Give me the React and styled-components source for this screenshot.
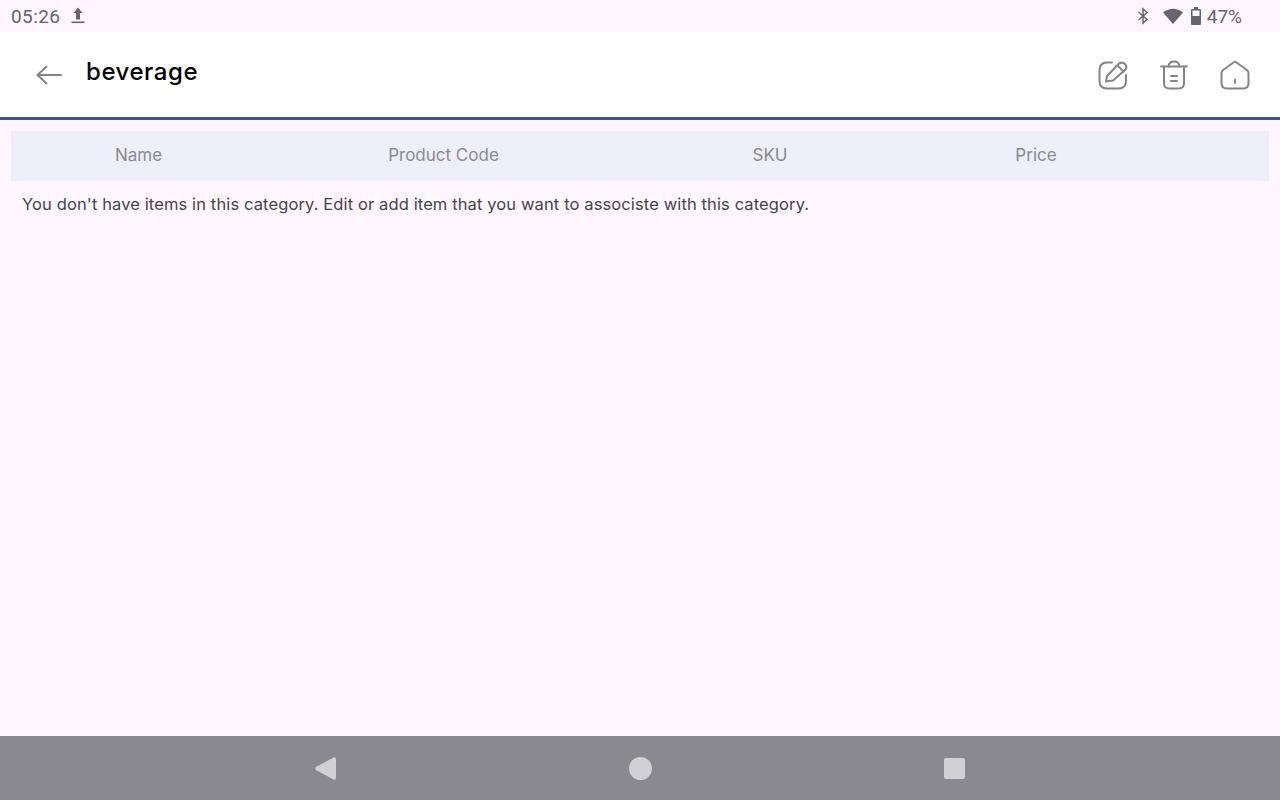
import styled, { createGlobalStyle } from "styled-components";

const GlobalStyle = createGlobalStyle`
  html, body, #root {
    margin: 0;
    padding: 0;
    height: 100%;
  }
  body {
    background: #fef7ff;
    font-family: Inter, "Liberation Sans", sans-serif;
    overflow: hidden;
  }
`;

const Screen = styled.div`
  width: 1280px;
  height: 800px;
  display: flex;
  flex-direction: column;
  background: #fef7ff;
`;

const StatusBar = styled.div`
  height: 32px;
  flex-shrink: 0;
  display: flex;
  align-items: center;
  justify-content: space-between;
  padding: 0 38px 0 11px;
  font-family: Roboto, sans-serif;
  font-size: 19px;
  color: #66656b;
`;

const StatusGroup = styled.div`
  display: flex;
  align-items: center;
  gap: ${(props) => props.$gap || 0}px;
`;

const Clock = styled.span`
  letter-spacing: 0.4px;
`;

const Battery = styled.span`
  margin-left: 6px;
`;

const Header = styled.header`
  height: 85px;
  flex-shrink: 0;
  display: flex;
  align-items: center;
  justify-content: space-between;
  padding: 0 30px 0 35px;
  background: #ffffff;
  border-bottom: 3px solid #3f51a0;
`;

const TitleGroup = styled.div`
  display: flex;
  align-items: center;
  gap: 24px;
`;

const Title = styled.h1`
  margin: 0 0 7px;
  font-size: 24px;
  font-weight: 500;
  letter-spacing: 0.55px;
  color: #000000;
`;

const Actions = styled.div`
  display: flex;
  align-items: center;
  gap: 31px;
`;

const Content = styled.main`
  flex: 1;
  padding: 11px 11px 0;
`;

const TableHead = styled.div`
  height: 48px;
  padding-bottom: 2px;
  display: grid;
  grid-template-columns: 255px 355px 298px 234px;
  align-items: center;
  background: #edf0fb;
  font-size: 17px;
  color: #8b8b8b;
`;

const HeadCell = styled.div`
  text-align: center;
`;

const EmptyText = styled.p`
  margin: 13px 0 0 11px;
  font-size: 16.5px;
  line-height: 20px;
  letter-spacing: 0.12px;
  color: #45444a;
`;

const NavBar = styled.nav`
  height: 64px;
  flex-shrink: 0;
  display: grid;
  grid-template-columns: 336px 316px 313px;
  align-items: center;
  background: #8a898f;
`;

const NavSlot = styled.div`
  display: flex;
  justify-content: flex-end;
`;

const Icon = styled.svg`
  display: block;
  fill: none;
  stroke: #858585;
  stroke-width: 2;
  stroke-linecap: round;
  stroke-linejoin: round;
`;

const SolidIcon = styled.svg`
  display: block;
  margin-left: ${(props) => props.$left || 0}px;
  fill: ${(props) => props.$fill || "#66656b"};
`;

const BluetoothIcon = styled.svg`
  display: block;
  fill: none;
  stroke: #66656b;
  stroke-width: 1.5;
`;

const App = () => {
  return (
    <>
      <GlobalStyle />
      <Screen>
        <StatusBar>
          <StatusGroup $gap={11}>
            <Clock>05:26</Clock>
            <SolidIcon width="14" height="18" viewBox="0 0 14 18">
              <path d="M7 0.5 L11.5 6 H9 V12.5 H5 V6 H2.5 Z" />
              <rect x="0.5" y="14.5" width="13" height="1.6" />
            </SolidIcon>
          </StatusGroup>
          <StatusGroup>
            <BluetoothIcon width="12" height="18" viewBox="0 0 12 18">
              <path d="M1.5 5 L10 12.5 L6 16 V2 L10 5.5 L1.5 13" />
            </BluetoothIcon>
            <SolidIcon $left={14} width="20" height="16" viewBox="0 0 20 16">
              <path d="M0 4.5 Q10 -3 20 4.5 L10 16 Z" />
            </SolidIcon>
            <SolidIcon $left={8} width="10" height="18" viewBox="0 0 10 18">
              <path
                fillRule="evenodd"
                d="M3 0 H7 V2 H9 Q10 2 10 3 V17 Q10 18 9 18 H1 Q0 18 0 17 V3 Q0 2 1 2 H3 Z M1.5 3.5 V9 H8.5 V3.5 Z"
              />
            </SolidIcon>
            <Battery>47%</Battery>
          </StatusGroup>
        </StatusBar>

        <Header>
          <TitleGroup>
            <Icon width="27" height="22" viewBox="0 0 27 22">
              <path d="M26 11 H3 M11.5 2.5 L2.5 11 L11.5 19.5" />
            </Icon>
            <Title>beverage</Title>
          </TitleGroup>
          <Actions>
            <Icon width="30" height="30" viewBox="0 0 30 30">
              <path d="M14 2.5 H9 Q1.5 2.5 1.5 10 V21 Q1.5 28.5 9 28.5 H20.5 Q28 28.5 28 21 V15" />
              <path d="M8 21.5 L9 16 L21 3.5 Q24 1.5 27 4 Q29.5 7 27.5 9.5 L15 20.5 Z" />
              <path d="M19.5 5.5 L25.5 11.5" />
            </Icon>
            <Icon width="30" height="30" viewBox="0 0 30 30">
              <path d="M2 6.5 H28" />
              <path d="M9.5 6.5 Q10 1.5 15 1.5 Q20 1.5 20.5 6.5" />
              <path d="M5 6.5 V23 Q5 28.5 10.5 28.5 H19.5 Q25 28.5 25 23 V6.5" />
              <path d="M12 16 H18 M12 21 H18" />
            </Icon>
            <Icon width="30" height="30" viewBox="0 0 30 30">
              <path d="M15 1.5 L27 10 Q28.5 11.5 28.5 13.5 V23 Q28.5 28.5 23 28.5 H7 Q1.5 28.5 1.5 23 V13.5 Q1.5 11.5 3 10 Z" />
              <path d="M15 19.5 V23" />
            </Icon>
          </Actions>
        </Header>

        <Content>
          <TableHead>
            <HeadCell>Name</HeadCell>
            <HeadCell>Product Code</HeadCell>
            <HeadCell>SKU</HeadCell>
            <HeadCell>Price</HeadCell>
          </TableHead>
          <EmptyText>
            You don't have items in this category. Edit or add item that you want to associste with this category.
          </EmptyText>
        </Content>

        <NavBar>
          <NavSlot>
            <SolidIcon $fill="#d1d1d3" width="21" height="23" viewBox="0 0 21 23">
              <path d="M18.5 0.5 Q21 -0.5 21 2.5 V20.5 Q21 23.5 18.5 22.5 L1 13 Q-0.5 11.5 1 10 Z" />
            </SolidIcon>
          </NavSlot>
          <NavSlot>
            <SolidIcon $fill="#d1d1d3" width="23" height="23" viewBox="0 0 23 23">
              <circle cx="11.5" cy="11.5" r="11.5" />
            </SolidIcon>
          </NavSlot>
          <NavSlot>
            <SolidIcon $fill="#d1d1d3" width="21" height="21" viewBox="0 0 21 21">
              <rect width="21" height="21" rx="2" />
            </SolidIcon>
          </NavSlot>
        </NavBar>
      </Screen>
    </>
  );
};

export default App;
